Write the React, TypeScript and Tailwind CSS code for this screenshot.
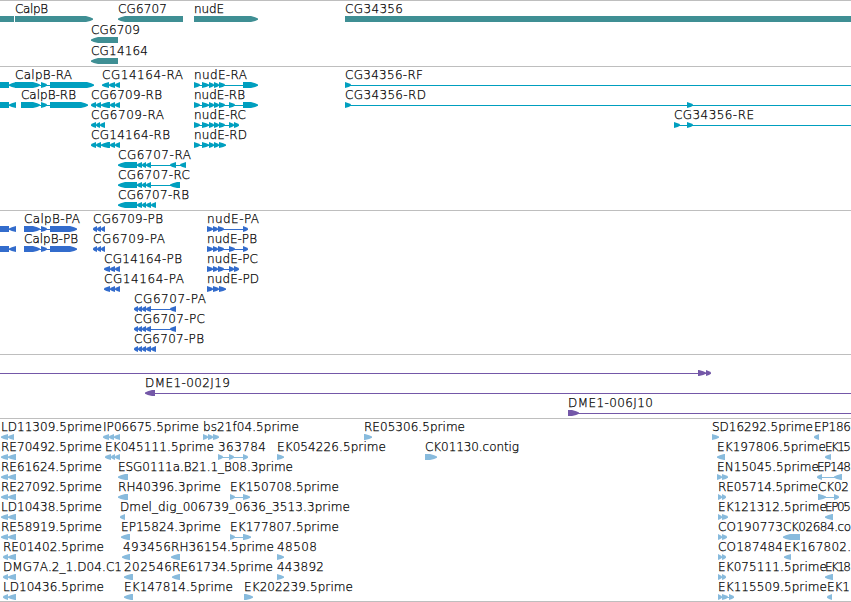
import React from "react";

// [text, x, width]
type Label = [string, number, number];
// [direction, start, end] - ">" forward exon, "<" reverse exon, "#" plain block, "-" intron line
type Glyph = [">" | "<" | "#" | "-", number, number];

interface Row {
  labels: Label[];
  glyphs: Glyph[];
}

interface TrackProps {
  name: string;
  rows: Row[];
  className: string;
  height: number;
  pitch?: number;
}

const VIEW_WIDTH = 851;
const HEAD = 7;

// consecutive exons that share their borders
const run = (dir: ">" | "<", ...stops: number[]): Glyph[] =>
  stops.slice(1).map((stop, i) => [dir, stops[i], stop]);

const line = (from: number, to: number): Glyph => ["-", from, to];

const genes: Row[] = [
  {
    labels: [["CalpB", 15, 33], ["CG6707", 118, 49], ["nudE", 194, 30], ["CG34356", 345, 58]],
    glyphs: [["#", 0, 14], [">", 15, 93], ["<", 118, 183], [">", 194, 258], ["#", 345, 851]],
  },
  { labels: [["CG6709", 91, 49]], glyphs: [["<", 91, 118]] },
  { labels: [["CG14164", 91, 57]], glyphs: [["<", 91, 118]] },
];

const transcripts: Row[] = [
  {
    labels: [["CalpB-RA", 15, 57], ["CG14164-RA", 102, 81], ["nudE-RA", 194, 53], ["CG34356-RF", 345, 78]],
    glyphs: [
      ["#", 0, 9], ["<", 9, 16], [">", 15, 40], [">", 41, 47], line(40, 50), [">", 50, 94],
      ...run("<", 102, 109, 115, 120),
      line(194, 243), [">", 194, 200], ...run(">", 202, 209, 214, 219, 225), [">", 243, 258],
      [">", 345, 351], line(345, 851),
    ],
  },
  {
    labels: [["CalpB-RB", 21, 55], ["CG6709-RB", 91, 71], ["nudE-RB", 194, 51], ["CG34356-RD", 345, 81]],
    glyphs: [
      ["#", 0, 9], ["<", 9, 16], [">", 21, 40], [">", 41, 47], line(40, 50), [">", 50, 88],
      ...run("<", 91, 96, 101, 110, 115, 120),
      line(194, 243), [">", 194, 200], ...run(">", 202, 209, 214, 219, 225), [">", 229, 235], [">", 243, 258],
      [">", 345, 351], [">", 687, 693], line(345, 851),
    ],
  },
  {
    labels: [["CG6709-RA", 91, 73], ["nudE-RC", 194, 52], ["CG34356-RE", 674, 80]],
    glyphs: [
      ...run("<", 91, 96, 100, 105),
      line(194, 234), [">", 194, 200], ...run(">", 202, 209, 214, 219, 225), ...run(">", 229, 234, 239),
      [">", 674, 680], [">", 687, 693], line(674, 851),
    ],
  },
  {
    labels: [["CG14164-RB", 91, 79], ["nudE-RD", 194, 53]],
    glyphs: [
      ...run("<", 91, 96, 101, 110, 115, 120),
      line(194, 220), [">", 194, 200], ...run(">", 202, 209, 214, 219, 226),
    ],
  },
  {
    labels: [["CG6707-RA", 118, 73]],
    glyphs: [...run("<", 118, 137, 142, 146, 151), line(137, 184), ["<", 170, 176], ["<", 180, 186]],
  },
  {
    labels: [["CG6707-RC", 118, 72]],
    glyphs: [...run("<", 118, 137, 142, 146, 151), line(137, 178), ["<", 170, 180]],
  },
  { labels: [["CG6707-RB", 118, 71]], glyphs: run("<", 118, 137, 142, 146, 151, 156) },
];

const calpBProtein: Glyph[] = [
  ["#", 0, 9], ["<", 9, 16], [">", 24, 40], [">", 41, 47], line(40, 50), [">", 50, 77],
];

const proteins: Row[] = [
  {
    labels: [["CalpB-PA", 24, 56], ["CG6709-PB", 93, 70], ["nudE-PA", 207, 52]],
    glyphs: [
      ...calpBProtein, ...run("<", 93, 97, 101, 105),
      ...run(">", 207, 213, 218, 224), line(207, 246), [">", 243, 248],
    ],
  },
  {
    labels: [["CalpB-PB", 24, 54], ["CG6709-PA", 93, 72], ["nudE-PB", 207, 50]],
    glyphs: [
      ...calpBProtein, ...run("<", 93, 97, 101, 105),
      ...run(">", 207, 213, 218, 224), line(207, 246), [">", 229, 235], [">", 243, 248],
    ],
  },
  {
    labels: [["CG14164-PB", 104, 78], ["nudE-PC", 207, 51]],
    glyphs: [
      ...run("<", 104, 110, 115, 120),
      ...run(">", 207, 213, 218, 224), line(207, 234), ...run(">", 229, 234, 239),
    ],
  },
  {
    labels: [["CG14164-PA", 104, 80], ["nudE-PD", 207, 52]],
    glyphs: [...run("<", 104, 110, 115, 120), ...run(">", 207, 213, 219, 226)],
  },
  {
    labels: [["CG6707-PA", 134, 72]],
    glyphs: [...run("<", 134, 138, 142, 146, 151), line(146, 174), ["<", 170, 176]],
  },
  {
    labels: [["CG6707-PC", 134, 71]],
    glyphs: [...run("<", 134, 138, 142, 146, 151), line(146, 174), ["<", 170, 176]],
  },
  { labels: [["CG6707-PB", 134, 70]], glyphs: run("<", 134, 138, 142, 146, 151, 156) },
];

const insertions: Row[] = [
  { labels: [], glyphs: [line(0, 708), ...run(">", 698, 706, 711)] },
  { labels: [["DME1-002J19", 145, 85]], glyphs: [["<", 145, 155], line(150, 851)] },
  { labels: [["DME1-006J10", 568, 85]], glyphs: [[">", 568, 579], line(570, 851)] },
];

const ests: Row[] = [
  {
    labels: [
      ["LD11309.5prime", 1, 101], ["IP06675.5prime", 103, 96], ["bs21f04.5prime", 203, 96],
      ["RE05306.5prime", 364, 101], ["SD16292.5prime", 712, 101], ["EP186", 814, 37],
    ],
    glyphs: [
      ...run("<", 1, 8, 14), ...run("<", 103, 109, 114, 120), ...run(">", 203, 208, 213, 219),
      [">", 364, 372], [">", 712, 719], ["<", 814, 819],
    ],
  },
  {
    labels: [
      ["RE70492.5prime", 1, 101], ["EK045111.5prime", 105, 109], ["363784", 218, 48],
      ["EK054226.5prime", 277, 109], ["CK01130.contig", 425, 94], ["EK197806.5prime", 717, 109], ["EK15", 825, 26],
    ],
    glyphs: [
      ...run("<", 1, 8, 16), ...run("<", 105, 111, 115, 120),
      line(218, 246), [">", 218, 223], [">", 229, 234], [">", 243, 248],
      [">", 277, 284], [">", 425, 437], ["<", 717, 725], ["<", 825, 831],
    ],
  },
  {
    labels: [
      ["RE61624.5prime", 1, 101], ["ESG0111a.B21.1_B08.3prime", 118, 175],
      ["EN15045.5prime", 717, 102], ["EP148", 817, 34],
    ],
    glyphs: [
      ...run("<", 1, 8, 16), ["<", 118, 128], ...run(">", 717, 722, 728),
      ["<", 817, 822], line(819, 838), ["<", 834, 842],
    ],
  },
  {
    labels: [
      ["RE27092.5prime", 1, 101], ["RH40396.3prime", 118, 103], ["EK150708.5prime", 230, 109],
      ["RE05714.5prime", 718, 100], ["CK02", 818, 31],
    ],
    glyphs: [
      ...run("<", 1, 8, 16), ["<", 118, 128], [">", 230, 235], line(230, 246), [">", 243, 250],
      ...run(">", 718, 722, 726), [">", 818, 826], line(820, 837), [">", 834, 839],
    ],
  },
  {
    labels: [
      ["LD10438.5prime", 1, 101], ["Dmel_dig_006739_0636_3513.3prime", 120, 230],
      ["EK121312.5prime", 718, 109], ["EP05", 825, 26],
    ],
    glyphs: [...run("<", 1, 8, 16), ["<", 120, 125], ...run(">", 718, 722, 728), ["<", 825, 833]],
  },
  {
    labels: [
      ["RE58919.5prime", 1, 101], ["EP15824.3prime", 121, 100], ["EK177807.5prime", 230, 109],
      ["CO190773", 718, 65], ["CK02684.co", 783, 68],
    ],
    glyphs: [
      ...run("<", 1, 8, 16), ["<", 121, 130], [">", 230, 235], line(230, 246), [">", 243, 251],
      ...run(">", 718, 722, 727), ["<", 783, 800],
    ],
  },
  {
    labels: [
      ["RE01402.5prime", 3, 101], ["493456", 123, 48], ["RH36154.5prime", 171, 103],
      ["48508", 277, 40], ["CO187484", 718, 65], ["EK167802.", 784, 67],
    ],
    glyphs: [
      ...run("<", 3, 8, 16), ["<", 122, 130], ["<", 171, 180], [">", 277, 284],
      ...run(">", 718, 722, 726), ["<", 784, 791],
    ],
  },
  {
    labels: [
      ["DMG7A.2_1.D04.C1", 3, 119], ["202546", 124, 48], ["RE61734.5prime", 172, 101],
      ["443892", 277, 47], ["EK075111.5prime", 718, 109], ["EK18", 825, 26],
    ],
    glyphs: [
      ...run("<", 3, 8, 16), ["<", 124, 133], ["<", 172, 180], [">", 277, 284],
      ...run(">", 718, 722, 726), ["<", 825, 833],
    ],
  },
  {
    labels: [
      ["LD10436.5prime", 3, 101], ["EK147814.5prime", 124, 109], ["EK202239.5prime", 244, 109],
      ["EK115509.5prime", 718, 109], ["EK1", 827, 23],
    ],
    glyphs: [
      ...run("<", 3, 8, 16), ["<", 124, 133], [">", 244, 253],
      ...run(">", 718, 722, 728), line(726, 732), [">", 729, 734], ["<", 827, 832],
    ],
  },
];

function Shape({ glyph, top }: { glyph: Glyph; top: number }) {
  const [kind, from, to] = glyph;
  const bottom = top + 6;
  const mid = top + 3;

  if (kind === "-") return <rect x={from} y={mid} width={to - from} height={1} />;
  if (kind === "#") return <rect x={from} y={top} width={to - from} height={6} />;

  const head = Math.min(HEAD, to - from);
  const sign = kind === ">" ? 1 : -1;
  const tip = kind === ">" ? to : from;
  const tail = kind === ">" ? from : to;
  const neck = tip - sign * head;
  const cheek = tip - sign * head * 0.4;
  return (
    <polygon
      points={`${tail},${top} ${neck},${top} ${cheek},${top + 1.3} ${tip},${mid - 0.5} ${tip},${mid + 0.7} ${cheek},${bottom - 1} ${neck},${bottom} ${tail},${bottom}`}
    />
  );
}

function Track({ name, rows, className, height, pitch = 20 }: TrackProps) {
  return (
    <section aria-label={name} className="shrink-0 border-t border-[#bebebe]">
      <svg width={VIEW_WIDTH} height={height} className={`block ${className}`}>
        {rows.map((row, i) => (
          <g key={i}>
            {row.glyphs.map((glyph, j) => (
              <Shape key={j} glyph={glyph} top={i * pitch + 15} />
            ))}
            {row.labels.map(([text, x, width]) => (
              <text
                key={text}
                x={x}
                y={i * pitch + 12}
                textLength={width}
                className="fill-black stroke-black stroke-[0.25px] font-['DejaVu_Sans',sans-serif] text-[12px] font-extralight"
              >
                {text}
              </text>
            ))}
          </g>
        ))}
      </svg>
    </section>
  );
}

export default function App() {
  return (
    <main className="flex h-[602px] w-[851px] flex-col overflow-hidden border-b border-[#bebebe] bg-white">
      <Track name="Genes" rows={genes} height={65} pitch={21} className="fill-[#3f8f94]" />
      <Track name="Transcripts" rows={transcripts} height={143} className="fill-[#009fbf]" />
      <Track name="Proteins" rows={proteins} height={143} className="fill-[#336ccc]" />
      <Track name="Insertions" rows={insertions} height={63} className="fill-[#7458a8]" />
      <Track name="ESTs" rows={ests} height={182} className="fill-[#88bbdd]" />
    </main>
  );
}
